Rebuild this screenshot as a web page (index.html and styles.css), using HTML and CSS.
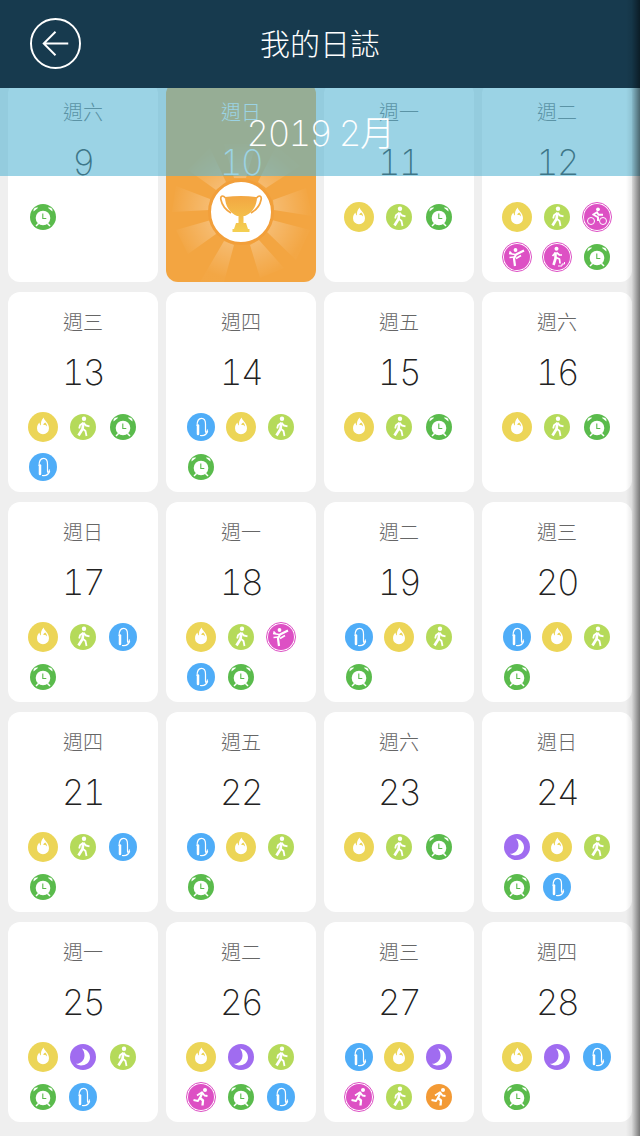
FILE: index.html
```html
<!DOCTYPE html>
<html lang="zh-Hant">
<head>
    <meta charset="UTF-8" />
    <meta name="viewport" content="width=device-width, initial-scale=1.0" />
    <title>我的日誌</title>
    <link rel="stylesheet" href="styles.css">
</head>
<body>
    <!-- Shared icons -->
    <svg class="sprite" xmlns="http://www.w3.org/2000/svg">
        <symbol id="fire" viewBox="0 0 30 30">
            <circle cx="15" cy="15" r="15" fill="#ecd557" />
            <path fill="#fff" d="M15.800 5.500c-.3 2.600 5.200 5 5.200 10.700a6 6 0 0 1-12 0c0-2.600 1.300-4.200 2.500-5.600.1 1.400.6 2.400 1.500 3-.4-3 .4-6.200 2.800-8.100z" />
            <path fill="#ecd557" d="M17.300 10.500c1.200 1.500 1.900 2.700 1.700 3.900-.9-1.500-2.500-1.600-3.700-1.300.2-1.100.8-2 2-2.600z" />
        </symbol>
        <symbol id="walk" viewBox="0 0 30 30">
            <circle cx="15" cy="15" r="13" fill="#b5da5a" />
            <circle cx="16" cy="6.800" r="2.200" fill="#fff" />
            <path fill="none" stroke="#fff" stroke-width="2.700" stroke-linejoin="round" d="M15.500 10.500l-1 6.500-4 6.500" />
            <path fill="none" stroke="#fff" stroke-width="1.800" stroke-linejoin="round" d="M14.500 16.500l3 2.500 1 5M15.500 11l2.500 2.500 3.500.8M15 11l-3 2.300-.8 3.200" />
        </symbol>
        <symbol id="clock" viewBox="0 0 30 30">
            <circle cx="15" cy="15" r="13" fill="#5abb4c" />
            <circle cx="15" cy="16" r="7.300" fill="#fff" />
            <path fill="none" stroke="#5abb4c" stroke-width="1.100" d="M14.800 11.500v5h3.500" />
            <path fill="#fff" d="M5.500 9.500c-.5-2.900 2-4.500 4.700-3.700zM24.500 9.500c.5-2.900-2-4.500-4.700-3.700z" />
            <path fill="none" stroke="#fff" stroke-width="1.500" d="M10.500 21.500l-2.500 2.500M19.500 21.500l2.500 2.500" />
        </symbol>
        <symbol id="band" viewBox="0 0 30 30">
            <circle cx="15" cy="15" r="14" fill="#4fadf8" />
            <path fill="none" stroke="#fff" stroke-width="2.500" stroke-linecap="round" d="M12 13.500v8.500" />
            <path fill="none" stroke="#fff" stroke-width="1.200" d="M11 14c0-5.500 2-7.700 4.500-7.700s4 2.200 4 5.700v7c0 2 1.500 2 2-1.500" />
            <path fill="none" stroke="#fff" stroke-width="1.200" d="M21.700 19c-.7 3-3.700 5-7.700 4.500" />
        </symbol>
        <symbol id="moon" viewBox="0 0 30 30">
            <circle cx="15" cy="15" r="13" fill="#a06cf0" />
            <path fill="#fff" d="M14 6.500C19 7.500 22 11 22 15.500 22 20.500 17.500 23.500 13 23.500 11 23.500 9.500 22.800 8 21.800 13 22 16.500 18 16.500 13.500 16.500 10.800 15.500 8.200 14 6.500Z" />
        </symbol>
        <symbol id="bike" viewBox="0 0 30 30">
            <circle cx="15" cy="15" r="14.500" fill="none" stroke="#dd50c4" />
            <circle cx="15" cy="15" r="13" fill="#dd50c4" />
            <circle cx="16" cy="7.300" r="1.900" fill="#fff" />
            <circle cx="9" cy="19" r="3.500" fill="none" stroke="#fff" stroke-width="1" />
            <circle cx="21" cy="19" r="3.500" fill="none" stroke="#fff" stroke-width="1" />
            <path fill="none" stroke="#fff" stroke-width="1.900" d="M10.500 13l4.500-2.800 1.500 2.500h4.500M12 13l4 2.300v3.700" />
        </symbol>
        <symbol id="kick" viewBox="0 0 30 30">
            <circle cx="15" cy="15" r="14.500" fill="none" stroke="#dd50c4" />
            <circle cx="15" cy="15" r="13" fill="#dd50c4" />
            <circle cx="13.500" cy="8" r="1.900" fill="#fff" />
            <path fill="none" stroke="#fff" stroke-width="2.200" stroke-linejoin="round" d="M13 24l-1-7.500 2-4 8-4" />
            <path fill="none" stroke="#fff" stroke-width="1.600" d="M13 12.500l-6-1M12.500 15l-5 .5M7.500 9.500l2 2M14 16.500l5-3" />
        </symbol>
        <symbol id="stair" viewBox="0 0 30 30">
            <circle cx="15" cy="15" r="14.500" fill="none" stroke="#dd50c4" />
            <circle cx="15" cy="15" r="13" fill="#dd50c4" />
            <circle cx="14.500" cy="6.800" r="2" fill="#fff" />
            <path fill="none" stroke="#fff" stroke-width="2.600" stroke-linejoin="round" d="M13.500 10.500v6l-2 6.500" />
            <path fill="none" stroke="#fff" stroke-width="1.700" stroke-linejoin="round" d="M14 15.500l3.500 1.500.5 4.500M13.500 10.500l-3 3.500M14.500 10.500l3 2.500h2.500" />
            <path fill="none" stroke="#fff" stroke-width="1" d="M16 24h4v-2h2.500v-2" />
        </symbol>
        <symbol id="runpink" viewBox="0 0 30 30">
            <circle cx="15" cy="15" r="14.500" fill="none" stroke="#dd50c4" />
            <circle cx="15" cy="15" r="13" fill="#dd50c4" />
            <circle cx="19" cy="8" r="2" fill="#fff" />
            <path fill="none" stroke="#fff" stroke-width="2.300" stroke-linejoin="round" d="M16.500 10.500l-2.500 5.500 3 2.500-.5 5" />
            <path fill="none" stroke="#fff" stroke-width="1.800" stroke-linejoin="round" d="M14 15.500l-2 3.500-4.500-1M11 13.500l5-3.200 2.500 3.200 3 .5" />
        </symbol>
        <symbol id="runorange" viewBox="0 0 30 30">
            <circle cx="15" cy="15" r="13" fill="#f39a35" />
            <circle cx="19" cy="8" r="2" fill="#fff" />
            <path fill="none" stroke="#fff" stroke-width="2.300" stroke-linejoin="round" d="M16.500 10.500l-2.500 5.500 3 2.500-.5 5" />
            <path fill="none" stroke="#fff" stroke-width="1.800" stroke-linejoin="round" d="M14 15.500l-2 3.500-4.500-1M11 13.500l5-3.200 2.500 3.200 3 .5" />
        </symbol>
    </svg>

    <header class="topbar">
        <button class="back" aria-label="back">
            <svg viewBox="0 0 52 52" width="51" height="51">
                <circle cx="26" cy="26" r="25" fill="none" stroke="#fff" stroke-width="2" />
                <path fill="none" stroke="#fff" stroke-width="2" d="M39 26H14M26 14L14 26l12 12" />
            </svg>
        </button>
        <h1>我的日誌</h1>
    </header>

    <div class="month">2019 2月</div>
    <div class="edge"></div>

    <main class="days">
        <div class="day">
            <div class="weekday">週六</div>
            <div class="num">9</div>
            <div class="icons">
                <svg class="ico"><use href="#clock" /></svg>
            </div>
        </div>
        <div class="day goal">
            <svg class="rays" viewBox="0 0 150 200">
                <defs>
                    <radialGradient id="rayFade" gradientUnits="userSpaceOnUse" cx="75" cy="130" r="68">
                        <stop offset="0.45" stop-color="#fff" stop-opacity="0.26" />
                        <stop offset="1" stop-color="#fff" stop-opacity="0.02" />
                    </radialGradient>
                    <linearGradient id="cupFill" gradientUnits="userSpaceOnUse" x1="0" y1="113" x2="0" y2="150">
                        <stop offset="0" stop-color="#f3a541" />
                        <stop offset="1" stop-color="#f4d052" />
                    </linearGradient>
                </defs>
                <g fill="url(#rayFade)">
                    <path d="M68 96L58 62H90L80 96Z" />
                    <path d="M92 100L110 64L134 84L100 106Z" />
                    <path d="M107 118L140 106L146 134L108 128Z" />
                    <path d="M106 138L144 148L130 178L101 150Z" />
                    <path d="M93 158L118 186L94 196L84 163Z" />
                    <path d="M68 163L58 200H34L58 159Z" />
                    <path d="M50 152L22 172L10 148L45 138Z" />
                    <path d="M43 128L6 130L10 104L44 117Z" />
                    <path d="M50 108L22 88L44 66L60 100Z" />
                </g>
                <circle cx="75" cy="130" r="31.500" fill="#fff" stroke="#f29f3a" stroke-width="3" />
                <g fill="url(#cupFill)">
                    <path d="M59 115Q75 113 91 115C91 124 86 131 79 134H71C64 131 59 124 59 115Z" />
                    <path d="M72.500 133h5v8h-5zM70 141h10l2 6H68zM66.500 147h17v3h-17z" />
                </g>
                <path fill="none" stroke="#f3a541" stroke-width="1.700" d="M59.500 116C56.500 112.500 54 114 55 118 56 123 60 128 65 131M90.500 116C93.500 112.500 96 114 95 118 94 123 90 128 85 131" />
            </svg>
            <div class="weekday">週日</div>
            <div class="num">10</div>
        </div>
        <div class="day">
            <div class="weekday">週一</div>
            <div class="num">11</div>
            <div class="icons">
                <svg class="ico"><use href="#fire" /></svg>
                <svg class="ico"><use href="#walk" /></svg>
                <svg class="ico"><use href="#clock" /></svg>
            </div>
        </div>
        <div class="day">
            <div class="weekday">週二</div>
            <div class="num">12</div>
            <div class="icons">
                <svg class="ico"><use href="#fire" /></svg>
                <svg class="ico"><use href="#walk" /></svg>
                <svg class="ico"><use href="#bike" /></svg>
                <svg class="ico"><use href="#kick" /></svg>
                <svg class="ico"><use href="#stair" /></svg>
                <svg class="ico"><use href="#clock" /></svg>
            </div>
        </div>

        <div class="day">
            <div class="weekday">週三</div>
            <div class="num">13</div>
            <div class="icons">
                <svg class="ico"><use href="#fire" /></svg>
                <svg class="ico"><use href="#walk" /></svg>
                <svg class="ico"><use href="#clock" /></svg>
                <svg class="ico"><use href="#band" /></svg>
            </div>
        </div>
        <div class="day">
            <div class="weekday">週四</div>
            <div class="num">14</div>
            <div class="icons">
                <svg class="ico"><use href="#band" /></svg>
                <svg class="ico"><use href="#fire" /></svg>
                <svg class="ico"><use href="#walk" /></svg>
                <svg class="ico"><use href="#clock" /></svg>
            </div>
        </div>
        <div class="day">
            <div class="weekday">週五</div>
            <div class="num">15</div>
            <div class="icons">
                <svg class="ico"><use href="#fire" /></svg>
                <svg class="ico"><use href="#walk" /></svg>
                <svg class="ico"><use href="#clock" /></svg>
            </div>
        </div>
        <div class="day">
            <div class="weekday">週六</div>
            <div class="num">16</div>
            <div class="icons">
                <svg class="ico"><use href="#fire" /></svg>
                <svg class="ico"><use href="#walk" /></svg>
                <svg class="ico"><use href="#clock" /></svg>
            </div>
        </div>

        <div class="day">
            <div class="weekday">週日</div>
            <div class="num">17</div>
            <div class="icons">
                <svg class="ico"><use href="#fire" /></svg>
                <svg class="ico"><use href="#walk" /></svg>
                <svg class="ico"><use href="#band" /></svg>
                <svg class="ico"><use href="#clock" /></svg>
            </div>
        </div>
        <div class="day">
            <div class="weekday">週一</div>
            <div class="num">18</div>
            <div class="icons">
                <svg class="ico"><use href="#fire" /></svg>
                <svg class="ico"><use href="#walk" /></svg>
                <svg class="ico"><use href="#kick" /></svg>
                <svg class="ico"><use href="#band" /></svg>
                <svg class="ico"><use href="#clock" /></svg>
            </div>
        </div>
        <div class="day">
            <div class="weekday">週二</div>
            <div class="num">19</div>
            <div class="icons">
                <svg class="ico"><use href="#band" /></svg>
                <svg class="ico"><use href="#fire" /></svg>
                <svg class="ico"><use href="#walk" /></svg>
                <svg class="ico"><use href="#clock" /></svg>
            </div>
        </div>
        <div class="day">
            <div class="weekday">週三</div>
            <div class="num">20</div>
            <div class="icons">
                <svg class="ico"><use href="#band" /></svg>
                <svg class="ico"><use href="#fire" /></svg>
                <svg class="ico"><use href="#walk" /></svg>
                <svg class="ico"><use href="#clock" /></svg>
            </div>
        </div>

        <div class="day">
            <div class="weekday">週四</div>
            <div class="num">21</div>
            <div class="icons">
                <svg class="ico"><use href="#fire" /></svg>
                <svg class="ico"><use href="#walk" /></svg>
                <svg class="ico"><use href="#band" /></svg>
                <svg class="ico"><use href="#clock" /></svg>
            </div>
        </div>
        <div class="day">
            <div class="weekday">週五</div>
            <div class="num">22</div>
            <div class="icons">
                <svg class="ico"><use href="#band" /></svg>
                <svg class="ico"><use href="#fire" /></svg>
                <svg class="ico"><use href="#walk" /></svg>
                <svg class="ico"><use href="#clock" /></svg>
            </div>
        </div>
        <div class="day">
            <div class="weekday">週六</div>
            <div class="num">23</div>
            <div class="icons">
                <svg class="ico"><use href="#fire" /></svg>
                <svg class="ico"><use href="#walk" /></svg>
                <svg class="ico"><use href="#clock" /></svg>
            </div>
        </div>
        <div class="day">
            <div class="weekday">週日</div>
            <div class="num">24</div>
            <div class="icons">
                <svg class="ico"><use href="#moon" /></svg>
                <svg class="ico"><use href="#fire" /></svg>
                <svg class="ico"><use href="#walk" /></svg>
                <svg class="ico"><use href="#clock" /></svg>
                <svg class="ico"><use href="#band" /></svg>
            </div>
        </div>

        <div class="day">
            <div class="weekday">週一</div>
            <div class="num">25</div>
            <div class="icons">
                <svg class="ico"><use href="#fire" /></svg>
                <svg class="ico"><use href="#moon" /></svg>
                <svg class="ico"><use href="#walk" /></svg>
                <svg class="ico"><use href="#clock" /></svg>
                <svg class="ico"><use href="#band" /></svg>
            </div>
        </div>
        <div class="day">
            <div class="weekday">週二</div>
            <div class="num">26</div>
            <div class="icons">
                <svg class="ico"><use href="#fire" /></svg>
                <svg class="ico"><use href="#moon" /></svg>
                <svg class="ico"><use href="#walk" /></svg>
                <svg class="ico"><use href="#runpink" /></svg>
                <svg class="ico"><use href="#clock" /></svg>
                <svg class="ico"><use href="#band" /></svg>
            </div>
        </div>
        <div class="day">
            <div class="weekday">週三</div>
            <div class="num">27</div>
            <div class="icons">
                <svg class="ico"><use href="#band" /></svg>
                <svg class="ico"><use href="#fire" /></svg>
                <svg class="ico"><use href="#moon" /></svg>
                <svg class="ico"><use href="#runpink" /></svg>
                <svg class="ico"><use href="#walk" /></svg>
                <svg class="ico"><use href="#runorange" /></svg>
            </div>
        </div>
        <div class="day">
            <div class="weekday">週四</div>
            <div class="num">28</div>
            <div class="icons">
                <svg class="ico"><use href="#fire" /></svg>
                <svg class="ico"><use href="#moon" /></svg>
                <svg class="ico"><use href="#band" /></svg>
                <svg class="ico"><use href="#clock" /></svg>
            </div>
        </div>
    </main>
</body>
</html>
```

FILE: styles.css
```css
html, body {
    margin: 0;
    padding: 0;
}

body {
    width: 640px;
    height: 1136px;
    overflow: hidden;
    position: relative;
    background-color: #efefef;
    font-family: Inter, "Noto Sans CJK TC", sans-serif;
    font-variant-numeric: tabular-nums;
}

.sprite {
    display: none;
}

/* Top bar sits over the first row */
.topbar {
    position: absolute;
    top: 0;
    left: 0;
    right: 0;
    height: 88px;
    background-color: #173a4e;
    display: flex;
    align-items: center;
    justify-content: center;
    z-index: 3;
}

.topbar h1 {
    margin: 0 0 4px;
    color: #fff;
    font-size: 30px;
    font-weight: 300;
    font-family: "Noto Sans CJK TC", sans-serif;
}

.back {
    position: absolute;
    left: 30px;
    top: 18px;
    width: 51px;
    height: 51px;
    padding: 0;
    border: none;
    background: none;
}

/* See-through month strip */
.month {
    position: absolute;
    top: 88px;
    left: 0;
    right: 0;
    height: 88px;
    line-height: 90px;
    text-align: center;
    color: #fff;
    font-size: 35px;
    font-weight: 200;
    letter-spacing: -1.5px;
    background-color: rgba(83, 179, 210, 0.58);
    z-index: 2;
}

/* Shadow down the right edge */
.edge {
    position: absolute;
    top: 0;
    right: 0;
    bottom: 0;
    width: 14px;
    background: linear-gradient(to right, rgba(0, 0, 0, 0), rgba(0, 0, 0, 0.08) 40%, rgba(0, 0, 0, 0.5));
    z-index: 4;
}

.days {
    display: grid;
    grid-template-columns: repeat(4, 150px);
    grid-auto-rows: 200px;
    gap: 10px 8px;
    padding: 82px 8px 0;
}

.day {
    position: relative;
    background-color: #fff;
    border-radius: 12px;
    text-align: center;
}

.weekday {
    padding-top: 16px;
    line-height: 28px;
    font-size: 20px;
    font-weight: 300;
    color: #666;
    font-family: "Noto Sans CJK TC", sans-serif;
}

.num {
    margin-top: 14px;
    line-height: 44px;
    font-size: 35px;
    font-weight: 200;
    letter-spacing: -1.5px;
    color: #222;
}

.icons {
    display: flex;
    flex-wrap: wrap;
    margin-top: 13px;
    padding-left: 15px;
}

.ico {
    width: 30px;
    height: 30px;
    padding: 5px;
}

/* Day the goal was reached */
.goal {
    background-color: #f3a541;
    overflow: hidden;
}

.goal .weekday,
.goal .num {
    position: relative;
    color: #fff;
}

.rays {
    position: absolute;
    top: 0;
    left: 0;
    width: 150px;
    height: 200px;
}
```
